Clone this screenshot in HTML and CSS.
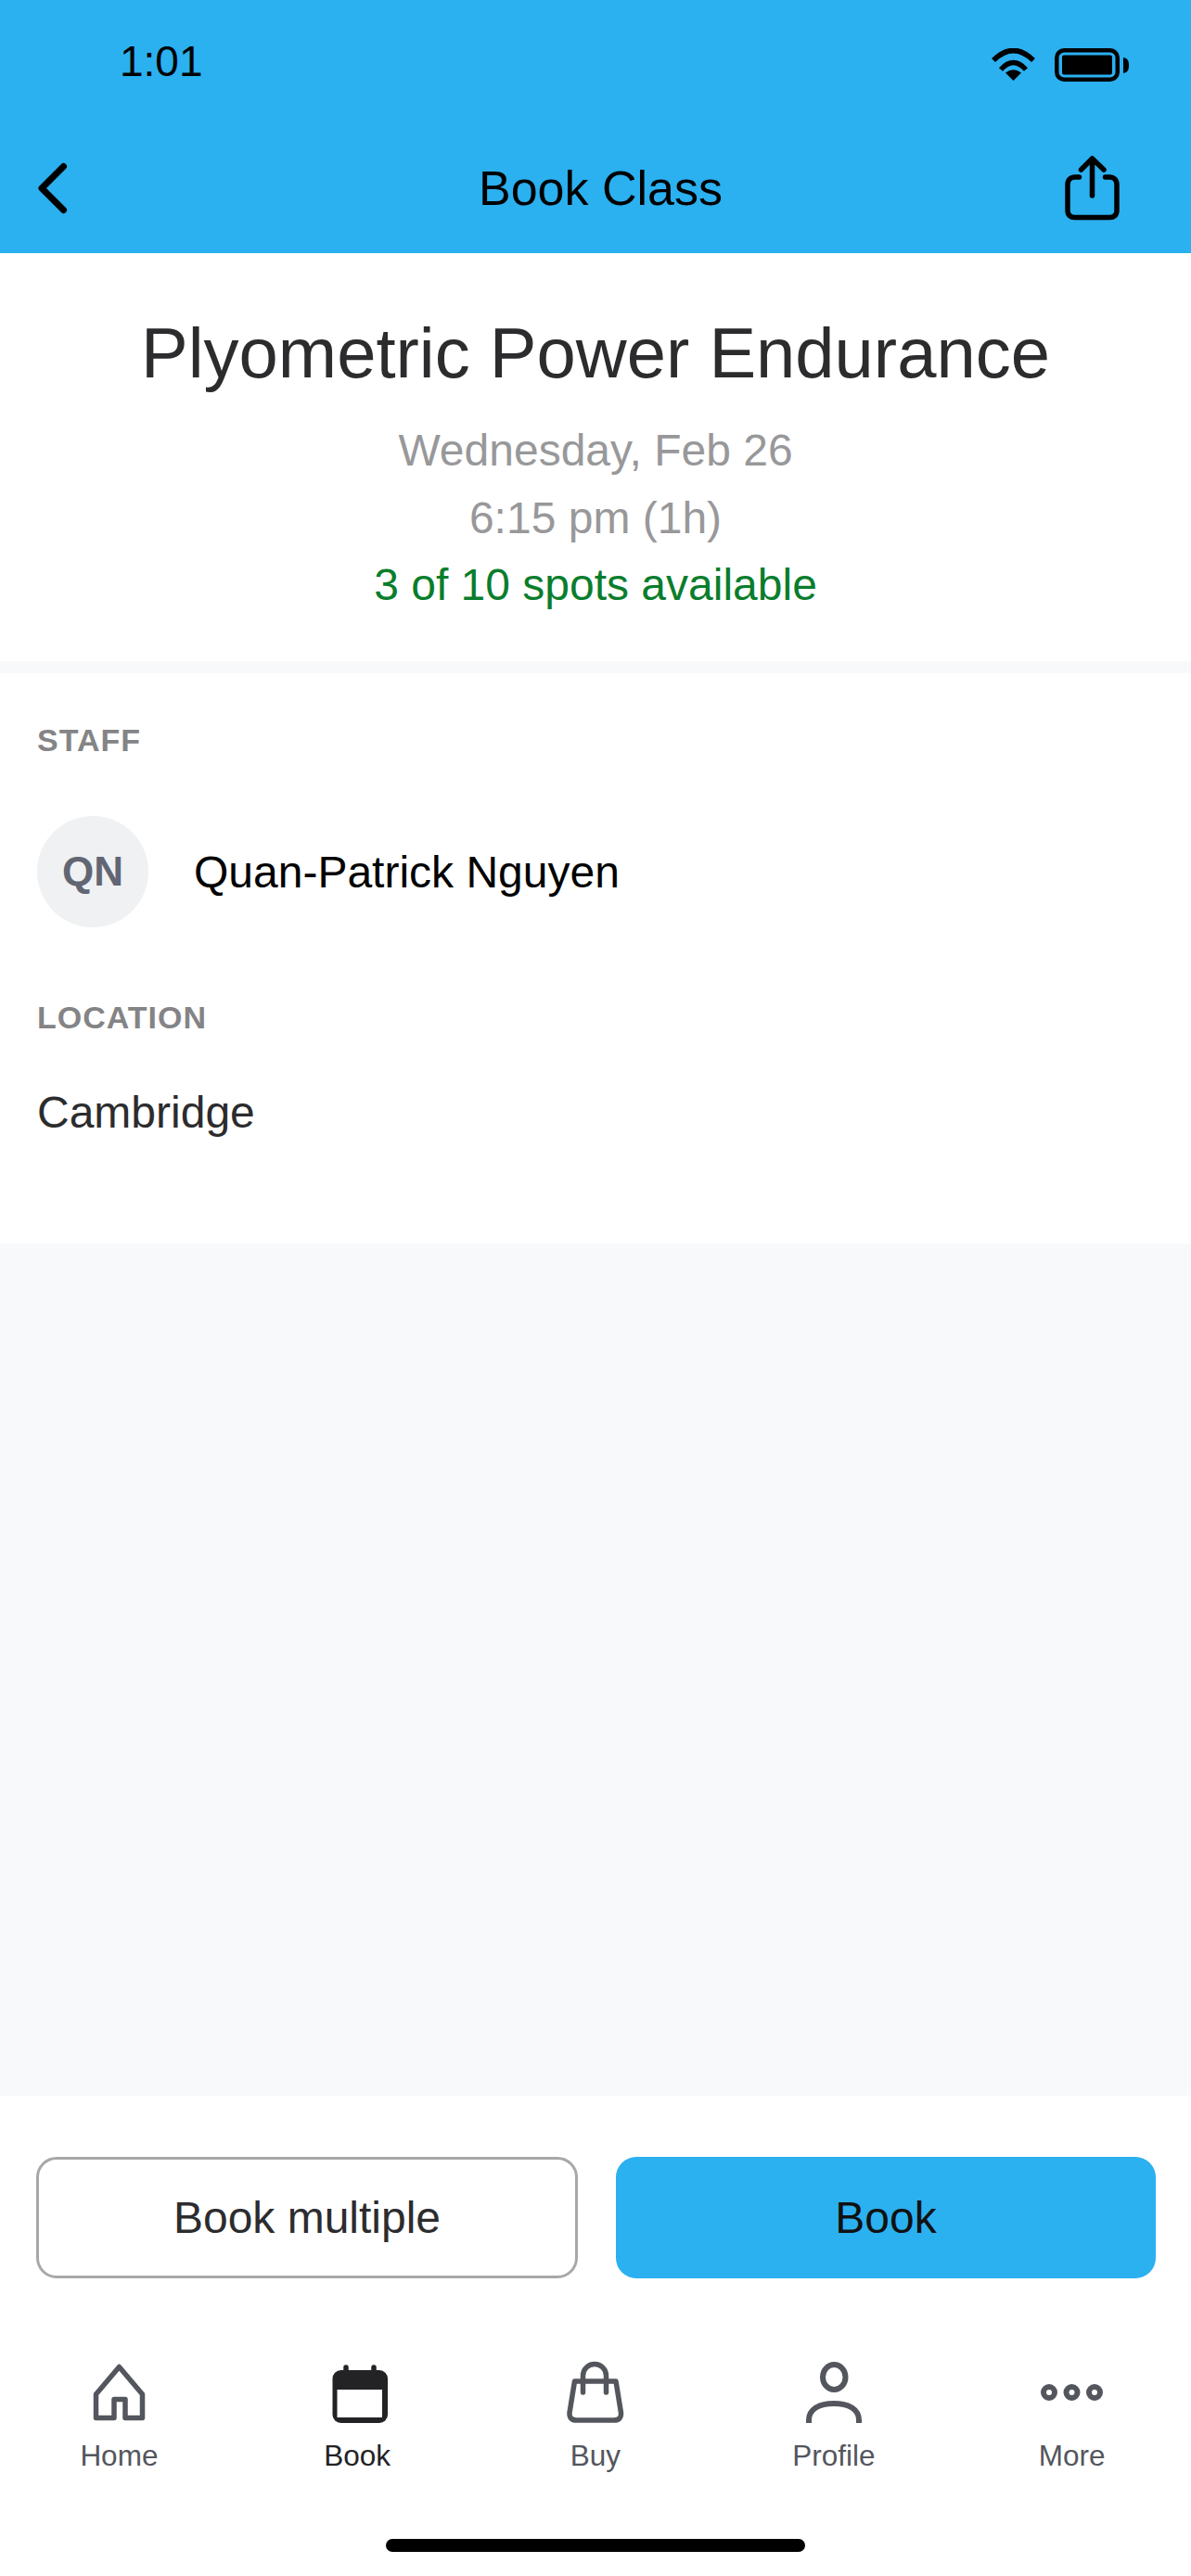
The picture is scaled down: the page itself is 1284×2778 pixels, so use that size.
FILE: index.html
```html
<!DOCTYPE html>
<html lang="en">
<head>
<meta charset="utf-8">
<title>Book Class</title>
<link rel="stylesheet" href="styles.css">
</head>
<body>
<div class="screen">
  <header class="top">
    <div class="status">
      <span class="time">1:01</span>
      <div class="status-icons">
        <svg width="50" height="36" viewBox="0 0 50 36"><path d="M3 13Q24.500 -8 46 13" fill="none" stroke="#000" stroke-width="5.500"/><path d="M11 23Q24.500 8 38 23" fill="none" stroke="#000" stroke-width="5.500"/><path d="M24.500 35L16 26.500Q24.500 20 33 26.500Z" fill="#000"/></svg>
        <svg width="80" height="36" viewBox="0 0 80 36"><rect x="2.250" y="2.250" width="65.500" height="31.500" rx="8" fill="none" stroke="#000" stroke-width="4.500"/><rect x="8" y="7.500" width="54" height="21" rx="2" fill="#000"/><path d="M74 10C79 11 80 14 80 18.500C80 23 79 26 74 27Z" fill="#000"/></svg>
      </div>
    </div>
    <div class="nav">
      <svg width="36" height="56" viewBox="0 0 36 56"><path d="M28.500 4.500L5 28L28.500 51.500" fill="none" stroke="#000" stroke-width="7" stroke-linecap="round" stroke-linejoin="round"/></svg>
      <h1 class="nav-title">Book Class</h1>
      <svg class="share" width="60" height="72" viewBox="0 0 60 72"><path d="M15.500 24H11C6 24 3 27 3 32V60C3 65 6 67.500 11 67.500H48C53 67.500 56 65 56 60V32C56 27 53 24 48 24H43.500" fill="none" stroke="#000" stroke-width="5.500" stroke-linecap="round"/><path d="M29.500 44V4M17.500 16L29.500 4L42 16" fill="none" stroke="#000" stroke-width="5.500" stroke-linecap="round" stroke-linejoin="round"/></svg>
    </div>
  </header>

  <section class="summary">
    <h2 class="class-name">Plyometric Power Endurance</h2>
    <p class="meta">Wednesday, Feb 26</p>
    <p class="meta">6:15 pm (1h)</p>
    <p class="spots">3 of 10 spots available</p>
  </section>

  <section class="details">
    <h3 class="label">STAFF</h3>
    <div class="staff-row">
      <div class="avatar">QN</div>
      <span class="staff-name">Quan-Patrick Nguyen</span>
    </div>
    <h3 class="label label-location">LOCATION</h3>
    <p class="location">Cambridge</p>
  </section>

  <div class="spacer"></div>

  <footer class="bottom">
    <div class="actions">
      <button class="btn btn-outline">Book multiple</button>
      <button class="btn btn-primary">Book</button>
    </div>
    <nav class="tabs">
      <div class="tab">
        <svg width="72" height="68" viewBox="0 0 72 68"><path d="M36.500 6.500L61.500 36V61.500H43V41.500H31V61.500H11.500V36Z" fill="none" stroke="#54565e" stroke-width="5.500" stroke-linejoin="round"/></svg>
        <span>Home</span>
      </div>
      <div class="tab tab-active">
        <svg width="72" height="68" viewBox="0 0 72 68"><path d="M24 7V14M54 7V14" stroke="#232326" stroke-width="5.500" stroke-linecap="round"/><rect x="9.500" y="10" width="59.500" height="57" rx="9" fill="#232326"/><rect x="14.500" y="31" width="48.500" height="30" fill="#fff"/></svg>
        <span>Book</span>
      </div>
      <div class="tab">
        <svg width="72" height="68" viewBox="0 0 72 68"><path d="M13.500 22H58L63.500 56Q64 64 56 64H15.500Q7.500 64 8 56Z" fill="none" stroke="#54565e" stroke-width="5.500" stroke-linejoin="round"/><path d="M22.500 34V16A12.500 12.500 0 0 1 47.500 16V34" fill="none" stroke="#54565e" stroke-width="5.500" stroke-linecap="round"/></svg>
        <span>Buy</span>
      </div>
      <div class="tab">
        <svg width="72" height="68" viewBox="0 0 72 68"><ellipse cx="36.250" cy="17.500" rx="12.250" ry="13.500" fill="none" stroke="#54565e" stroke-width="6"/><path d="M9 67V64C9 52 20 46 36 46C52 46 63 52 63 64V67" fill="none" stroke="#54565e" stroke-width="6"/></svg>
        <span>Profile</span>
      </div>
      <div class="tab">
        <svg width="72" height="68" viewBox="0 0 72 68"><circle cx="11" cy="34" r="6" fill="none" stroke="#54565e" stroke-width="6"/><circle cx="35.500" cy="34" r="6" fill="none" stroke="#54565e" stroke-width="6"/><circle cx="60" cy="34" r="6" fill="none" stroke="#54565e" stroke-width="6"/></svg>
        <span>More</span>
      </div>
    </nav>
    <div class="home-indicator"></div>
  </footer>
</div>
</body>
</html>
```
FILE: styles.css
```css
* { box-sizing: border-box; margin: 0; padding: 0; }
html, body { height: 100%; }
body { font-family: "Liberation Sans", Arial, sans-serif; background: #fff; }
.screen { width: 1284px; height: 2778px; display: flex; flex-direction: column; overflow: hidden; background: #f8f9fb; }

.top { height: 273px; background: #2bb0f0; display: flex; flex-direction: column; flex: none; }
.status { height: 135px; padding: 38px 67px 0 129px; display: flex; justify-content: space-between; align-items: flex-start; }
.time { font-size: 46px; line-height: 56px; color: #000; }
.status-icons { display: flex; align-items: flex-start; gap: 19px; margin-top: 14px; }
.nav { flex: 1; display: flex; align-items: center; padding: 0 76px 2px 40px; }
.nav-title { font-size: 52px; font-weight: 400; color: #000; line-height: 60px; margin-left: 440px; }
.share { margin-left: auto; }

.summary { background: #fff; height: 440px; padding-top: 64px; text-align: center; flex: none; }
.class-name { font-size: 76px; font-weight: 400; color: #2c2c2e; line-height: 88px; margin-bottom: 25px; }
.meta { font-size: 48px; line-height: 72.500px; color: #98989a; }
.spots { font-size: 48px; line-height: 72.500px; color: #0a7d2c; }

.details { background: #fff; margin-top: 13px; height: 615px; padding: 52px 40px 0; flex: none; }
.label { font-size: 34px; font-weight: 700; color: #848486; line-height: 40px; letter-spacing: 1px; }
.staff-row { display: flex; align-items: center; gap: 49px; margin-top: 62px; }
.avatar { width: 120px; height: 120px; border-radius: 50%; background: #eff1f3; color: #626673; font-size: 44px; font-weight: 700; display: flex; align-items: center; justify-content: center; }
.staff-name { font-size: 48px; color: #000; }
.label-location { margin-top: 77px; }
.location { font-size: 48px; color: #2c2c2e; line-height: 60px; margin-top: 53px; }

.spacer { flex: 1; }

.bottom { height: 518px; background: #fff; flex: none; display: flex; flex-direction: column; }
.actions { display: flex; gap: 41px; padding: 66px 38px 0 39px; }
.btn { flex: none; height: 131px; padding: 0; border-radius: 22px; font-family: inherit; font-size: 48px; }
.btn-outline { width: 584px; background: #fff; border: 3px solid #a8a8aa; color: #2c2c2e; }
.btn-primary { width: 582px; background: #2bb0f0; border: none; color: #111; }

.tabs { display: flex; padding-top: 89px; }
.tab { flex: 1; display: flex; flex-direction: column; align-items: center; gap: 16px; color: #54565e; font-size: 31.500px; line-height: 36px; }
.tab-active { color: #232326; }
.home-indicator { width: 452px; height: 14px; border-radius: 7px; background: #000; margin: 72px auto 0; }
```
